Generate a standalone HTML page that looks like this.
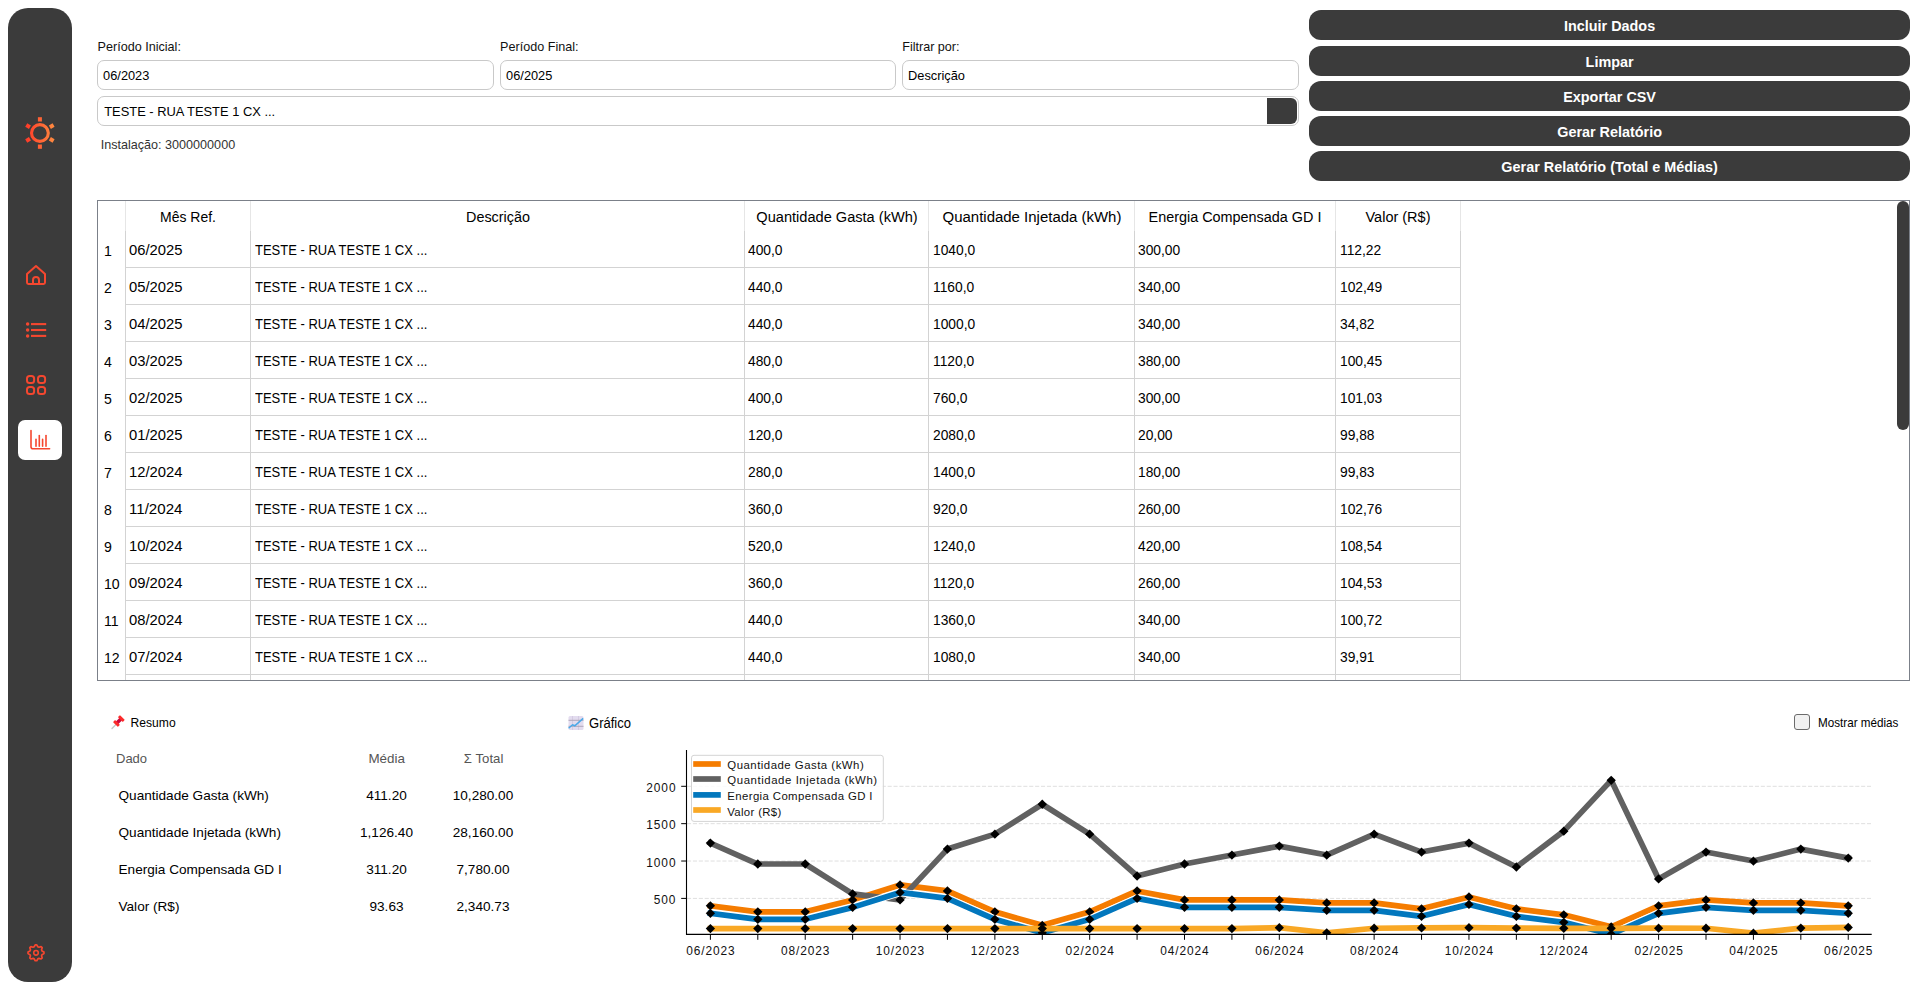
<!DOCTYPE html>
<html><head><meta charset="utf-8"><title>Relatório</title>
<style>
html,body{margin:0;padding:0;}
body{width:1915px;height:982px;position:relative;overflow:hidden;background:#fff;font-family:"Liberation Sans", sans-serif;}
.t{position:absolute;white-space:nowrap;}
.box{position:absolute;box-sizing:border-box;border:1px solid #c9c9c9;border-radius:7px;background:#fff;}
</style></head><body>
<div style="position:absolute;left:8px;top:8px;width:64px;height:974px;background:#3b3b3b;border-radius:20px;"></div>
<div style="position:absolute;left:18px;top:420px;width:44px;height:40px;background:#fff;border-radius:7px;"></div>
<svg style="position:absolute;left:0;top:0" width="80" height="982" viewBox="0 0 80 982"><defs><linearGradient id="sg" gradientUnits="userSpaceOnUse" x1="26" y1="0" x2="54" y2="0"><stop offset="0" stop-color="#ff3a28"/><stop offset="1" stop-color="#ff8a40"/></linearGradient></defs><g stroke="url(#sg)" fill="none"><circle cx="39.9" cy="133" r="8.4" stroke-width="3.1" stroke="url(#sg)"/><line x1="39.90" y1="121.50" x2="39.90" y2="117.20" stroke-width="4"/><line x1="49.86" y1="127.25" x2="53.58" y2="125.10" stroke-width="4"/><line x1="49.86" y1="138.75" x2="53.58" y2="140.90" stroke-width="4"/><line x1="39.90" y1="144.50" x2="39.90" y2="148.80" stroke-width="4"/><line x1="29.94" y1="138.75" x2="26.22" y2="140.90" stroke-width="4"/><line x1="29.94" y1="127.25" x2="26.22" y2="125.10" stroke-width="4"/></g><g fill="none" stroke="#f5472f" stroke-width="2" stroke-linejoin="round" stroke-linecap="round"><path d="M27 282.6 V274 L36 266 L45 274 V282.6 Q45 284 43.6 284 H28.4 Q27 284 27 282.6 Z"/><path d="M33 284 V280 A3 3 0 0 1 39 280 V284"/></g><g fill="#f5472f"><circle cx="27.6" cy="324.1" r="1.75"/><circle cx="27.6" cy="330" r="1.75"/><circle cx="27.6" cy="335.9" r="1.75"/></g><g stroke="#f5472f" stroke-width="2.1"><line x1="31" y1="324.1" x2="46.2" y2="324.1"/><line x1="31" y1="330" x2="46.2" y2="330"/><line x1="31" y1="335.9" x2="46.2" y2="335.9"/></g><g fill="none" stroke="#f5472f" stroke-width="2"><rect x="27" y="376" width="7.1" height="7.1" rx="2.6"/><rect x="27" y="387" width="7.1" height="7.1" rx="2.6"/><rect x="38" y="376" width="7.1" height="7.1" rx="2.6"/><rect x="38" y="387" width="7.1" height="7.1" rx="2.6"/></g><g fill="none" stroke="#f5472f" stroke-width="1.6" stroke-linecap="round"><path d="M31 430.5 V446.8 Q31 448.8 33 448.8 H49.6"/><line x1="36.0" y1="439.4" x2="36.0" y2="446.2"/><line x1="39.3" y1="435.5" x2="39.3" y2="446.2"/><line x1="42.6" y1="439.4" x2="42.6" y2="446.2"/><line x1="46.0" y1="435.5" x2="46.0" y2="446.2"/></g><path d="M35.22 944.84 L36.78 944.84 L37.83 946.77 L38.97 947.24 L41.08 946.62 L42.18 947.72 L41.56 949.83 L42.03 950.97 L43.96 952.02 L43.96 953.58 L42.03 954.63 L41.56 955.77 L42.18 957.88 L41.08 958.98 L38.97 958.36 L37.83 958.83 L36.78 960.76 L35.22 960.76 L34.17 958.83 L33.03 958.36 L30.92 958.98 L29.82 957.88 L30.44 955.77 L29.97 954.63 L28.04 953.58 L28.04 952.02 L29.97 950.97 L30.44 949.83 L29.82 947.72 L30.92 946.62 L33.03 947.24 L34.17 946.77 Z" fill="none" stroke="#f5472f" stroke-width="1.7" stroke-linejoin="round"/><circle cx="36.0" cy="952.8" r="2.3" fill="none" stroke="#f5472f" stroke-width="1.6"/></svg>
<div class="t" style="left:97.60px;top:41.33px;font-size:12.6px;line-height:12.6px;color:#111;font-weight:400;">Período Inicial:</div>
<div class="t" style="left:500.10px;top:41.33px;font-size:12.6px;line-height:12.6px;color:#111;font-weight:400;">Período Final:</div>
<div class="t" style="left:902.20px;top:41.33px;font-size:12.6px;line-height:12.6px;color:#111;font-weight:400;">Filtrar por:</div>
<div class="box" style="left:97px;top:60px;width:397px;height:30px;"></div>
<div class="t" style="left:103.10px;top:70.16px;font-size:12.8px;line-height:12.8px;color:#000;font-weight:400;">06/2023</div>
<div class="box" style="left:500px;top:60px;width:396px;height:30px;"></div>
<div class="t" style="left:506.10px;top:70.16px;font-size:12.8px;line-height:12.8px;color:#000;font-weight:400;">06/2025</div>
<div class="box" style="left:902px;top:60px;width:397px;height:30px;"></div>
<div class="t" style="left:908.10px;top:70.16px;font-size:12.8px;line-height:12.8px;color:#000;font-weight:400;">Descrição</div>
<div class="box" style="left:97px;top:96px;width:1202px;height:30px;"></div>
<div style="position:absolute;left:1267px;top:98px;width:30px;height:26px;background:#3b3b3b;border-radius:0 6px 6px 0;"></div>
<div class="t" style="left:104.20px;top:106.08px;font-size:12.9px;line-height:12.9px;color:#000;font-weight:400;">TESTE - RUA TESTE 1 CX ...</div>
<div class="t" style="left:100.70px;top:139.33px;font-size:12.6px;line-height:12.6px;color:#333;font-weight:400;">Instalação: 3000000000</div>
<div style="position:absolute;left:1309px;top:10px;width:601px;height:30px;background:#3b3b3b;border-radius:12px;"></div>
<div class="t" style="left:1309.60px;width:600px;text-align:center;top:18.81px;font-size:14.4px;line-height:14.4px;color:#fff;font-weight:700;">Incluir Dados</div>
<div style="position:absolute;left:1309px;top:46px;width:601px;height:30px;background:#3b3b3b;border-radius:12px;"></div>
<div class="t" style="left:1309.60px;width:600px;text-align:center;top:54.81px;font-size:14.4px;line-height:14.4px;color:#fff;font-weight:700;">Limpar</div>
<div style="position:absolute;left:1309px;top:81px;width:601px;height:30px;background:#3b3b3b;border-radius:12px;"></div>
<div class="t" style="left:1309.60px;width:600px;text-align:center;top:89.81px;font-size:14.4px;line-height:14.4px;color:#fff;font-weight:700;">Exportar CSV</div>
<div style="position:absolute;left:1309px;top:116px;width:601px;height:30px;background:#3b3b3b;border-radius:12px;"></div>
<div class="t" style="left:1309.60px;width:600px;text-align:center;top:124.81px;font-size:14.4px;line-height:14.4px;color:#fff;font-weight:700;">Gerar Relatório</div>
<div style="position:absolute;left:1309px;top:151px;width:601px;height:30px;background:#3b3b3b;border-radius:12px;"></div>
<div class="t" style="left:1309.60px;width:600px;text-align:center;top:159.81px;font-size:14.4px;line-height:14.4px;color:#fff;font-weight:700;">Gerar Relatório (Total e Médias)</div>
<div style="position:absolute;left:97px;top:200px;width:1811px;height:479px;border:1px solid #7b8089;background:#fff;"></div>
<div style="position:absolute;left:125px;top:201px;width:1px;height:30px;background:#e6e6e6;"></div>
<div style="position:absolute;left:125px;top:231px;width:1px;height:449px;background:#d3d3d3;"></div>
<div style="position:absolute;left:250px;top:201px;width:1px;height:30px;background:#e6e6e6;"></div>
<div style="position:absolute;left:250px;top:231px;width:1px;height:449px;background:#d3d3d3;"></div>
<div style="position:absolute;left:744px;top:201px;width:1px;height:30px;background:#e6e6e6;"></div>
<div style="position:absolute;left:744px;top:231px;width:1px;height:449px;background:#d3d3d3;"></div>
<div style="position:absolute;left:928px;top:201px;width:1px;height:30px;background:#e6e6e6;"></div>
<div style="position:absolute;left:928px;top:231px;width:1px;height:449px;background:#d3d3d3;"></div>
<div style="position:absolute;left:1134px;top:201px;width:1px;height:30px;background:#e6e6e6;"></div>
<div style="position:absolute;left:1134px;top:231px;width:1px;height:449px;background:#d3d3d3;"></div>
<div style="position:absolute;left:1335px;top:201px;width:1px;height:30px;background:#e6e6e6;"></div>
<div style="position:absolute;left:1335px;top:231px;width:1px;height:449px;background:#d3d3d3;"></div>
<div style="position:absolute;left:1460px;top:201px;width:1px;height:30px;background:#e6e6e6;"></div>
<div style="position:absolute;left:1460px;top:231px;width:1px;height:449px;background:#d3d3d3;"></div>
<div style="position:absolute;left:125px;top:267px;width:1336px;height:1px;background:#d3d3d3;"></div>
<div style="position:absolute;left:125px;top:304px;width:1336px;height:1px;background:#d3d3d3;"></div>
<div style="position:absolute;left:125px;top:341px;width:1336px;height:1px;background:#d3d3d3;"></div>
<div style="position:absolute;left:125px;top:378px;width:1336px;height:1px;background:#d3d3d3;"></div>
<div style="position:absolute;left:125px;top:415px;width:1336px;height:1px;background:#d3d3d3;"></div>
<div style="position:absolute;left:125px;top:452px;width:1336px;height:1px;background:#d3d3d3;"></div>
<div style="position:absolute;left:125px;top:489px;width:1336px;height:1px;background:#d3d3d3;"></div>
<div style="position:absolute;left:125px;top:526px;width:1336px;height:1px;background:#d3d3d3;"></div>
<div style="position:absolute;left:125px;top:563px;width:1336px;height:1px;background:#d3d3d3;"></div>
<div style="position:absolute;left:125px;top:600px;width:1336px;height:1px;background:#d3d3d3;"></div>
<div style="position:absolute;left:125px;top:637px;width:1336px;height:1px;background:#d3d3d3;"></div>
<div style="position:absolute;left:125px;top:674px;width:1336px;height:1px;background:#d3d3d3;"></div>
<div class="t" style="left:-112.00px;width:600px;text-align:center;top:209.13px;font-size:15.2px;line-height:15.2px;color:#000;font-weight:400;transform:scaleX(0.9208);transform-origin:50% 0;">Mês Ref.</div>
<div class="t" style="left:197.50px;width:600px;text-align:center;top:209.13px;font-size:15.2px;line-height:15.2px;color:#000;font-weight:400;transform:scaleX(0.9471);transform-origin:50% 0;">Descrição</div>
<div class="t" style="left:536.50px;width:600px;text-align:center;top:209.13px;font-size:15.2px;line-height:15.2px;color:#000;font-weight:400;transform:scaleX(0.9606);transform-origin:50% 0;">Quantidade Gasta (kWh)</div>
<div class="t" style="left:731.50px;width:600px;text-align:center;top:209.13px;font-size:15.2px;line-height:15.2px;color:#000;font-weight:400;transform:scaleX(0.9853);transform-origin:50% 0;">Quantidade Injetada (kWh)</div>
<div class="t" style="left:935.00px;width:600px;text-align:center;top:209.13px;font-size:15.2px;line-height:15.2px;color:#000;font-weight:400;transform:scaleX(0.9479);transform-origin:50% 0;">Energia Compensada GD I</div>
<div class="t" style="left:1098.00px;width:600px;text-align:center;top:209.13px;font-size:15.2px;line-height:15.2px;color:#000;font-weight:400;transform:scaleX(0.9540);transform-origin:50% 0;">Valor (R$)</div>
<div class="t" style="left:103.60px;top:243.13px;font-size:15.2px;line-height:15.2px;color:#000;font-weight:400;transform:scaleX(0.9300);transform-origin:0 0;">1</div>
<div class="t" style="left:129.30px;top:242.13px;font-size:15.2px;line-height:15.2px;color:#000;font-weight:400;transform:scaleX(0.9737);transform-origin:0 0;">06/2025</div>
<div class="t" style="left:255.10px;top:242.13px;font-size:15.2px;line-height:15.2px;color:#000;font-weight:400;transform:scaleX(0.8557);transform-origin:0 0;">TESTE - RUA TESTE 1 CX ...</div>
<div class="t" style="left:748.40px;top:242.13px;font-size:15.2px;line-height:15.2px;color:#000;font-weight:400;transform:scaleX(0.9082);transform-origin:0 0;">400,0</div>
<div class="t" style="left:933.00px;top:242.13px;font-size:15.2px;line-height:15.2px;color:#000;font-weight:400;transform:scaleX(0.9082);transform-origin:0 0;">1040,0</div>
<div class="t" style="left:1138.20px;top:242.13px;font-size:15.2px;line-height:15.2px;color:#000;font-weight:400;transform:scaleX(0.9082);transform-origin:0 0;">300,00</div>
<div class="t" style="left:1339.90px;top:242.13px;font-size:15.2px;line-height:15.2px;color:#000;font-weight:400;transform:scaleX(0.9082);transform-origin:0 0;">112,22</div>
<div class="t" style="left:103.60px;top:280.13px;font-size:15.2px;line-height:15.2px;color:#000;font-weight:400;transform:scaleX(0.9300);transform-origin:0 0;">2</div>
<div class="t" style="left:129.30px;top:279.13px;font-size:15.2px;line-height:15.2px;color:#000;font-weight:400;transform:scaleX(0.9737);transform-origin:0 0;">05/2025</div>
<div class="t" style="left:255.10px;top:279.13px;font-size:15.2px;line-height:15.2px;color:#000;font-weight:400;transform:scaleX(0.8557);transform-origin:0 0;">TESTE - RUA TESTE 1 CX ...</div>
<div class="t" style="left:748.40px;top:279.13px;font-size:15.2px;line-height:15.2px;color:#000;font-weight:400;transform:scaleX(0.9082);transform-origin:0 0;">440,0</div>
<div class="t" style="left:933.00px;top:279.13px;font-size:15.2px;line-height:15.2px;color:#000;font-weight:400;transform:scaleX(0.9082);transform-origin:0 0;">1160,0</div>
<div class="t" style="left:1138.20px;top:279.13px;font-size:15.2px;line-height:15.2px;color:#000;font-weight:400;transform:scaleX(0.9082);transform-origin:0 0;">340,00</div>
<div class="t" style="left:1339.90px;top:279.13px;font-size:15.2px;line-height:15.2px;color:#000;font-weight:400;transform:scaleX(0.9082);transform-origin:0 0;">102,49</div>
<div class="t" style="left:103.60px;top:317.13px;font-size:15.2px;line-height:15.2px;color:#000;font-weight:400;transform:scaleX(0.9300);transform-origin:0 0;">3</div>
<div class="t" style="left:129.30px;top:316.13px;font-size:15.2px;line-height:15.2px;color:#000;font-weight:400;transform:scaleX(0.9737);transform-origin:0 0;">04/2025</div>
<div class="t" style="left:255.10px;top:316.13px;font-size:15.2px;line-height:15.2px;color:#000;font-weight:400;transform:scaleX(0.8557);transform-origin:0 0;">TESTE - RUA TESTE 1 CX ...</div>
<div class="t" style="left:748.40px;top:316.13px;font-size:15.2px;line-height:15.2px;color:#000;font-weight:400;transform:scaleX(0.9082);transform-origin:0 0;">440,0</div>
<div class="t" style="left:933.00px;top:316.13px;font-size:15.2px;line-height:15.2px;color:#000;font-weight:400;transform:scaleX(0.9082);transform-origin:0 0;">1000,0</div>
<div class="t" style="left:1138.20px;top:316.13px;font-size:15.2px;line-height:15.2px;color:#000;font-weight:400;transform:scaleX(0.9082);transform-origin:0 0;">340,00</div>
<div class="t" style="left:1339.90px;top:316.13px;font-size:15.2px;line-height:15.2px;color:#000;font-weight:400;transform:scaleX(0.9082);transform-origin:0 0;">34,82</div>
<div class="t" style="left:103.60px;top:354.13px;font-size:15.2px;line-height:15.2px;color:#000;font-weight:400;transform:scaleX(0.9300);transform-origin:0 0;">4</div>
<div class="t" style="left:129.30px;top:353.13px;font-size:15.2px;line-height:15.2px;color:#000;font-weight:400;transform:scaleX(0.9737);transform-origin:0 0;">03/2025</div>
<div class="t" style="left:255.10px;top:353.13px;font-size:15.2px;line-height:15.2px;color:#000;font-weight:400;transform:scaleX(0.8557);transform-origin:0 0;">TESTE - RUA TESTE 1 CX ...</div>
<div class="t" style="left:748.40px;top:353.13px;font-size:15.2px;line-height:15.2px;color:#000;font-weight:400;transform:scaleX(0.9082);transform-origin:0 0;">480,0</div>
<div class="t" style="left:933.00px;top:353.13px;font-size:15.2px;line-height:15.2px;color:#000;font-weight:400;transform:scaleX(0.9082);transform-origin:0 0;">1120,0</div>
<div class="t" style="left:1138.20px;top:353.13px;font-size:15.2px;line-height:15.2px;color:#000;font-weight:400;transform:scaleX(0.9082);transform-origin:0 0;">380,00</div>
<div class="t" style="left:1339.90px;top:353.13px;font-size:15.2px;line-height:15.2px;color:#000;font-weight:400;transform:scaleX(0.9082);transform-origin:0 0;">100,45</div>
<div class="t" style="left:103.60px;top:391.13px;font-size:15.2px;line-height:15.2px;color:#000;font-weight:400;transform:scaleX(0.9300);transform-origin:0 0;">5</div>
<div class="t" style="left:129.30px;top:390.13px;font-size:15.2px;line-height:15.2px;color:#000;font-weight:400;transform:scaleX(0.9737);transform-origin:0 0;">02/2025</div>
<div class="t" style="left:255.10px;top:390.13px;font-size:15.2px;line-height:15.2px;color:#000;font-weight:400;transform:scaleX(0.8557);transform-origin:0 0;">TESTE - RUA TESTE 1 CX ...</div>
<div class="t" style="left:748.40px;top:390.13px;font-size:15.2px;line-height:15.2px;color:#000;font-weight:400;transform:scaleX(0.9082);transform-origin:0 0;">400,0</div>
<div class="t" style="left:933.00px;top:390.13px;font-size:15.2px;line-height:15.2px;color:#000;font-weight:400;transform:scaleX(0.9082);transform-origin:0 0;">760,0</div>
<div class="t" style="left:1138.20px;top:390.13px;font-size:15.2px;line-height:15.2px;color:#000;font-weight:400;transform:scaleX(0.9082);transform-origin:0 0;">300,00</div>
<div class="t" style="left:1339.90px;top:390.13px;font-size:15.2px;line-height:15.2px;color:#000;font-weight:400;transform:scaleX(0.9082);transform-origin:0 0;">101,03</div>
<div class="t" style="left:103.60px;top:428.13px;font-size:15.2px;line-height:15.2px;color:#000;font-weight:400;transform:scaleX(0.9300);transform-origin:0 0;">6</div>
<div class="t" style="left:129.30px;top:427.13px;font-size:15.2px;line-height:15.2px;color:#000;font-weight:400;transform:scaleX(0.9737);transform-origin:0 0;">01/2025</div>
<div class="t" style="left:255.10px;top:427.13px;font-size:15.2px;line-height:15.2px;color:#000;font-weight:400;transform:scaleX(0.8557);transform-origin:0 0;">TESTE - RUA TESTE 1 CX ...</div>
<div class="t" style="left:748.40px;top:427.13px;font-size:15.2px;line-height:15.2px;color:#000;font-weight:400;transform:scaleX(0.9082);transform-origin:0 0;">120,0</div>
<div class="t" style="left:933.00px;top:427.13px;font-size:15.2px;line-height:15.2px;color:#000;font-weight:400;transform:scaleX(0.9082);transform-origin:0 0;">2080,0</div>
<div class="t" style="left:1138.20px;top:427.13px;font-size:15.2px;line-height:15.2px;color:#000;font-weight:400;transform:scaleX(0.9082);transform-origin:0 0;">20,00</div>
<div class="t" style="left:1339.90px;top:427.13px;font-size:15.2px;line-height:15.2px;color:#000;font-weight:400;transform:scaleX(0.9082);transform-origin:0 0;">99,88</div>
<div class="t" style="left:103.60px;top:465.13px;font-size:15.2px;line-height:15.2px;color:#000;font-weight:400;transform:scaleX(0.9300);transform-origin:0 0;">7</div>
<div class="t" style="left:129.30px;top:464.13px;font-size:15.2px;line-height:15.2px;color:#000;font-weight:400;transform:scaleX(0.9737);transform-origin:0 0;">12/2024</div>
<div class="t" style="left:255.10px;top:464.13px;font-size:15.2px;line-height:15.2px;color:#000;font-weight:400;transform:scaleX(0.8557);transform-origin:0 0;">TESTE - RUA TESTE 1 CX ...</div>
<div class="t" style="left:748.40px;top:464.13px;font-size:15.2px;line-height:15.2px;color:#000;font-weight:400;transform:scaleX(0.9082);transform-origin:0 0;">280,0</div>
<div class="t" style="left:933.00px;top:464.13px;font-size:15.2px;line-height:15.2px;color:#000;font-weight:400;transform:scaleX(0.9082);transform-origin:0 0;">1400,0</div>
<div class="t" style="left:1138.20px;top:464.13px;font-size:15.2px;line-height:15.2px;color:#000;font-weight:400;transform:scaleX(0.9082);transform-origin:0 0;">180,00</div>
<div class="t" style="left:1339.90px;top:464.13px;font-size:15.2px;line-height:15.2px;color:#000;font-weight:400;transform:scaleX(0.9082);transform-origin:0 0;">99,83</div>
<div class="t" style="left:103.60px;top:502.13px;font-size:15.2px;line-height:15.2px;color:#000;font-weight:400;transform:scaleX(0.9300);transform-origin:0 0;">8</div>
<div class="t" style="left:129.30px;top:501.13px;font-size:15.2px;line-height:15.2px;color:#000;font-weight:400;transform:scaleX(0.9941);transform-origin:0 0;">11/2024</div>
<div class="t" style="left:255.10px;top:501.13px;font-size:15.2px;line-height:15.2px;color:#000;font-weight:400;transform:scaleX(0.8557);transform-origin:0 0;">TESTE - RUA TESTE 1 CX ...</div>
<div class="t" style="left:748.40px;top:501.13px;font-size:15.2px;line-height:15.2px;color:#000;font-weight:400;transform:scaleX(0.9082);transform-origin:0 0;">360,0</div>
<div class="t" style="left:933.00px;top:501.13px;font-size:15.2px;line-height:15.2px;color:#000;font-weight:400;transform:scaleX(0.9082);transform-origin:0 0;">920,0</div>
<div class="t" style="left:1138.20px;top:501.13px;font-size:15.2px;line-height:15.2px;color:#000;font-weight:400;transform:scaleX(0.9082);transform-origin:0 0;">260,00</div>
<div class="t" style="left:1339.90px;top:501.13px;font-size:15.2px;line-height:15.2px;color:#000;font-weight:400;transform:scaleX(0.9082);transform-origin:0 0;">102,76</div>
<div class="t" style="left:103.60px;top:539.13px;font-size:15.2px;line-height:15.2px;color:#000;font-weight:400;transform:scaleX(0.9300);transform-origin:0 0;">9</div>
<div class="t" style="left:129.30px;top:538.13px;font-size:15.2px;line-height:15.2px;color:#000;font-weight:400;transform:scaleX(0.9737);transform-origin:0 0;">10/2024</div>
<div class="t" style="left:255.10px;top:538.13px;font-size:15.2px;line-height:15.2px;color:#000;font-weight:400;transform:scaleX(0.8557);transform-origin:0 0;">TESTE - RUA TESTE 1 CX ...</div>
<div class="t" style="left:748.40px;top:538.13px;font-size:15.2px;line-height:15.2px;color:#000;font-weight:400;transform:scaleX(0.9082);transform-origin:0 0;">520,0</div>
<div class="t" style="left:933.00px;top:538.13px;font-size:15.2px;line-height:15.2px;color:#000;font-weight:400;transform:scaleX(0.9082);transform-origin:0 0;">1240,0</div>
<div class="t" style="left:1138.20px;top:538.13px;font-size:15.2px;line-height:15.2px;color:#000;font-weight:400;transform:scaleX(0.9082);transform-origin:0 0;">420,00</div>
<div class="t" style="left:1339.90px;top:538.13px;font-size:15.2px;line-height:15.2px;color:#000;font-weight:400;transform:scaleX(0.9082);transform-origin:0 0;">108,54</div>
<div class="t" style="left:103.60px;top:576.13px;font-size:15.2px;line-height:15.2px;color:#000;font-weight:400;transform:scaleX(0.9300);transform-origin:0 0;">10</div>
<div class="t" style="left:129.30px;top:575.13px;font-size:15.2px;line-height:15.2px;color:#000;font-weight:400;transform:scaleX(0.9737);transform-origin:0 0;">09/2024</div>
<div class="t" style="left:255.10px;top:575.13px;font-size:15.2px;line-height:15.2px;color:#000;font-weight:400;transform:scaleX(0.8557);transform-origin:0 0;">TESTE - RUA TESTE 1 CX ...</div>
<div class="t" style="left:748.40px;top:575.13px;font-size:15.2px;line-height:15.2px;color:#000;font-weight:400;transform:scaleX(0.9082);transform-origin:0 0;">360,0</div>
<div class="t" style="left:933.00px;top:575.13px;font-size:15.2px;line-height:15.2px;color:#000;font-weight:400;transform:scaleX(0.9082);transform-origin:0 0;">1120,0</div>
<div class="t" style="left:1138.20px;top:575.13px;font-size:15.2px;line-height:15.2px;color:#000;font-weight:400;transform:scaleX(0.9082);transform-origin:0 0;">260,00</div>
<div class="t" style="left:1339.90px;top:575.13px;font-size:15.2px;line-height:15.2px;color:#000;font-weight:400;transform:scaleX(0.9082);transform-origin:0 0;">104,53</div>
<div class="t" style="left:103.60px;top:613.13px;font-size:15.2px;line-height:15.2px;color:#000;font-weight:400;transform:scaleX(0.9300);transform-origin:0 0;">11</div>
<div class="t" style="left:129.30px;top:612.13px;font-size:15.2px;line-height:15.2px;color:#000;font-weight:400;transform:scaleX(0.9737);transform-origin:0 0;">08/2024</div>
<div class="t" style="left:255.10px;top:612.13px;font-size:15.2px;line-height:15.2px;color:#000;font-weight:400;transform:scaleX(0.8557);transform-origin:0 0;">TESTE - RUA TESTE 1 CX ...</div>
<div class="t" style="left:748.40px;top:612.13px;font-size:15.2px;line-height:15.2px;color:#000;font-weight:400;transform:scaleX(0.9082);transform-origin:0 0;">440,0</div>
<div class="t" style="left:933.00px;top:612.13px;font-size:15.2px;line-height:15.2px;color:#000;font-weight:400;transform:scaleX(0.9082);transform-origin:0 0;">1360,0</div>
<div class="t" style="left:1138.20px;top:612.13px;font-size:15.2px;line-height:15.2px;color:#000;font-weight:400;transform:scaleX(0.9082);transform-origin:0 0;">340,00</div>
<div class="t" style="left:1339.90px;top:612.13px;font-size:15.2px;line-height:15.2px;color:#000;font-weight:400;transform:scaleX(0.9082);transform-origin:0 0;">100,72</div>
<div class="t" style="left:103.60px;top:650.13px;font-size:15.2px;line-height:15.2px;color:#000;font-weight:400;transform:scaleX(0.9300);transform-origin:0 0;">12</div>
<div class="t" style="left:129.30px;top:649.13px;font-size:15.2px;line-height:15.2px;color:#000;font-weight:400;transform:scaleX(0.9737);transform-origin:0 0;">07/2024</div>
<div class="t" style="left:255.10px;top:649.13px;font-size:15.2px;line-height:15.2px;color:#000;font-weight:400;transform:scaleX(0.8557);transform-origin:0 0;">TESTE - RUA TESTE 1 CX ...</div>
<div class="t" style="left:748.40px;top:649.13px;font-size:15.2px;line-height:15.2px;color:#000;font-weight:400;transform:scaleX(0.9082);transform-origin:0 0;">440,0</div>
<div class="t" style="left:933.00px;top:649.13px;font-size:15.2px;line-height:15.2px;color:#000;font-weight:400;transform:scaleX(0.9082);transform-origin:0 0;">1080,0</div>
<div class="t" style="left:1138.20px;top:649.13px;font-size:15.2px;line-height:15.2px;color:#000;font-weight:400;transform:scaleX(0.9082);transform-origin:0 0;">340,00</div>
<div class="t" style="left:1339.90px;top:649.13px;font-size:15.2px;line-height:15.2px;color:#000;font-weight:400;transform:scaleX(0.9082);transform-origin:0 0;">39,91</div>
<div style="position:absolute;left:1897px;top:201px;width:12px;height:229px;background:#3b3b3b;border-radius:6px;"></div>
<svg style="position:absolute;left:108px;top:712px" width="20" height="20" viewBox="0 0 20 20"><line x1="4.0" y1="16.4" x2="8.2" y2="12.2" stroke="#c4c8c8" stroke-width="1.4" stroke-linecap="round"/><g transform="rotate(45 10.9 9.0)"><rect x="9.1" y="5.8" width="3.6" height="6.4" fill="#c8083f"/><rect x="7.5" y="4.1" width="6.8" height="2.9" rx="0.5" fill="#fb2b2b"/><rect x="7.5" y="11.0" width="6.8" height="2.9" rx="0.5" fill="#fb2b2b"/></g></svg>
<div class="t" style="left:130.60px;top:716.76px;font-size:12.1px;line-height:12.1px;color:#000;font-weight:400;">Resumo</div>
<div class="t" style="left:116.00px;top:752.00px;font-size:13.0px;line-height:13.0px;color:#555;font-weight:400;">Dado</div>
<div class="t" style="left:86.70px;width:600px;text-align:center;top:751.66px;font-size:13.4px;line-height:13.4px;color:#555;font-weight:400;">Média</div>
<div class="t" style="left:183.50px;width:600px;text-align:center;top:751.83px;font-size:13.2px;line-height:13.2px;color:#555;font-weight:400;">Σ Total</div>
<div class="t" style="left:118.50px;top:789.49px;font-size:13.6px;line-height:13.6px;color:#000;font-weight:400;">Quantidade Gasta (kWh)</div>
<div class="t" style="left:86.50px;width:600px;text-align:center;top:789.49px;font-size:13.6px;line-height:13.6px;color:#000;font-weight:400;">411.20</div>
<div class="t" style="left:183.00px;width:600px;text-align:center;top:789.49px;font-size:13.6px;line-height:13.6px;color:#000;font-weight:400;">10,280.00</div>
<div class="t" style="left:118.50px;top:826.49px;font-size:13.6px;line-height:13.6px;color:#000;font-weight:400;">Quantidade Injetada (kWh)</div>
<div class="t" style="left:86.50px;width:600px;text-align:center;top:826.49px;font-size:13.6px;line-height:13.6px;color:#000;font-weight:400;">1,126.40</div>
<div class="t" style="left:183.00px;width:600px;text-align:center;top:826.49px;font-size:13.6px;line-height:13.6px;color:#000;font-weight:400;">28,160.00</div>
<div class="t" style="left:118.50px;top:863.49px;font-size:13.6px;line-height:13.6px;color:#000;font-weight:400;">Energia Compensada GD I</div>
<div class="t" style="left:86.50px;width:600px;text-align:center;top:863.49px;font-size:13.6px;line-height:13.6px;color:#000;font-weight:400;">311.20</div>
<div class="t" style="left:183.00px;width:600px;text-align:center;top:863.49px;font-size:13.6px;line-height:13.6px;color:#000;font-weight:400;">7,780.00</div>
<div class="t" style="left:118.50px;top:900.49px;font-size:13.6px;line-height:13.6px;color:#000;font-weight:400;">Valor (R$)</div>
<div class="t" style="left:86.50px;width:600px;text-align:center;top:900.49px;font-size:13.6px;line-height:13.6px;color:#000;font-weight:400;">93.63</div>
<div class="t" style="left:183.00px;width:600px;text-align:center;top:900.49px;font-size:13.6px;line-height:13.6px;color:#000;font-weight:400;">2,340.73</div>
<svg style="position:absolute;left:568px;top:716px" width="16" height="14" viewBox="0 0 16 14"><rect x="0.5" y="0" width="15" height="14" rx="1.5" fill="#e3dcef"/><g stroke="#d2c8de" stroke-width="0.8"><line x1="4.5" y1="0" x2="4.5" y2="14"/><line x1="10.5" y1="0" x2="10.5" y2="14"/></g><g stroke="#aaa2b4" stroke-width="0.9"><line x1="0.5" y1="4.3" x2="15.5" y2="4.3"/><line x1="0.5" y1="10.3" x2="15.5" y2="10.3"/></g><polyline points="0.6,12.2 4.5,8.8 6.8,9.8 15.2,2.4" fill="none" stroke="#4aa8e8" stroke-width="1.5"/></svg>
<div class="t" style="left:589.10px;top:716.15px;font-size:14.0px;line-height:14.0px;color:#000;font-weight:400;transform:scaleX(0.9308);transform-origin:0 0;">Gráfico</div>
<div style="position:absolute;left:1794px;top:714px;width:14px;height:14px;border:1px solid #6b6b6b;border-radius:3px;background:#f1f1f1;"></div>
<div class="t" style="left:1817.60px;top:716.50px;font-size:12.4px;line-height:12.4px;color:#000;font-weight:400;transform:scaleX(0.9409);transform-origin:0 0;">Mostrar médias</div>
<svg style="position:absolute;left:0;top:0" width="1915" height="982" viewBox="0 0 1915 982"><defs><clipPath id="pc"><rect x="687" y="740" width="1200" height="194.4"/></clipPath></defs><line x1="687" y1="786.30" x2="1871" y2="786.30" stroke="#dfdfdf" stroke-width="1" stroke-dasharray="4.1 1.8"/><line x1="681.2" y1="786.30" x2="686.5" y2="786.30" stroke="#000" stroke-width="1"/><line x1="687" y1="823.67" x2="1871" y2="823.67" stroke="#dfdfdf" stroke-width="1" stroke-dasharray="4.1 1.8"/><line x1="681.2" y1="823.67" x2="686.5" y2="823.67" stroke="#000" stroke-width="1"/><line x1="687" y1="861.03" x2="1871" y2="861.03" stroke="#dfdfdf" stroke-width="1" stroke-dasharray="4.1 1.8"/><line x1="681.2" y1="861.03" x2="686.5" y2="861.03" stroke="#000" stroke-width="1"/><line x1="687" y1="898.40" x2="1871" y2="898.40" stroke="#dfdfdf" stroke-width="1" stroke-dasharray="4.1 1.8"/><line x1="681.2" y1="898.40" x2="686.5" y2="898.40" stroke="#000" stroke-width="1"/><line x1="710.40" y1="934.4" x2="710.40" y2="939.8" stroke="#000" stroke-width="1"/><line x1="757.81" y1="934.4" x2="757.81" y2="939.8" stroke="#000" stroke-width="1"/><line x1="805.22" y1="934.4" x2="805.22" y2="939.8" stroke="#000" stroke-width="1"/><line x1="852.63" y1="934.4" x2="852.63" y2="939.8" stroke="#000" stroke-width="1"/><line x1="900.04" y1="934.4" x2="900.04" y2="939.8" stroke="#000" stroke-width="1"/><line x1="947.45" y1="934.4" x2="947.45" y2="939.8" stroke="#000" stroke-width="1"/><line x1="994.86" y1="934.4" x2="994.86" y2="939.8" stroke="#000" stroke-width="1"/><line x1="1042.27" y1="934.4" x2="1042.27" y2="939.8" stroke="#000" stroke-width="1"/><line x1="1089.68" y1="934.4" x2="1089.68" y2="939.8" stroke="#000" stroke-width="1"/><line x1="1137.09" y1="934.4" x2="1137.09" y2="939.8" stroke="#000" stroke-width="1"/><line x1="1184.50" y1="934.4" x2="1184.50" y2="939.8" stroke="#000" stroke-width="1"/><line x1="1231.91" y1="934.4" x2="1231.91" y2="939.8" stroke="#000" stroke-width="1"/><line x1="1279.32" y1="934.4" x2="1279.32" y2="939.8" stroke="#000" stroke-width="1"/><line x1="1326.73" y1="934.4" x2="1326.73" y2="939.8" stroke="#000" stroke-width="1"/><line x1="1374.14" y1="934.4" x2="1374.14" y2="939.8" stroke="#000" stroke-width="1"/><line x1="1421.55" y1="934.4" x2="1421.55" y2="939.8" stroke="#000" stroke-width="1"/><line x1="1468.96" y1="934.4" x2="1468.96" y2="939.8" stroke="#000" stroke-width="1"/><line x1="1516.37" y1="934.4" x2="1516.37" y2="939.8" stroke="#000" stroke-width="1"/><line x1="1563.78" y1="934.4" x2="1563.78" y2="939.8" stroke="#000" stroke-width="1"/><line x1="1611.19" y1="934.4" x2="1611.19" y2="939.8" stroke="#000" stroke-width="1"/><line x1="1658.60" y1="934.4" x2="1658.60" y2="939.8" stroke="#000" stroke-width="1"/><line x1="1706.01" y1="934.4" x2="1706.01" y2="939.8" stroke="#000" stroke-width="1"/><line x1="1753.42" y1="934.4" x2="1753.42" y2="939.8" stroke="#000" stroke-width="1"/><line x1="1800.83" y1="934.4" x2="1800.83" y2="939.8" stroke="#000" stroke-width="1"/><line x1="1848.24" y1="934.4" x2="1848.24" y2="939.8" stroke="#000" stroke-width="1"/><g clip-path="url(#pc)"><polyline points="710.40,905.87 757.81,911.85 805.22,911.85 852.63,899.89 900.04,884.95 947.45,890.93 994.86,911.85 1042.27,925.30 1089.68,911.85 1137.09,890.93 1184.50,899.89 1231.91,899.89 1279.32,899.89 1326.73,902.88 1374.14,902.88 1421.55,908.86 1468.96,896.91 1516.37,908.86 1563.78,914.84 1611.19,926.80 1658.60,905.87 1706.01,899.89 1753.42,902.88 1800.83,902.88 1848.24,905.87" fill="none" stroke="#f57c00" stroke-width="5.7" stroke-linejoin="round" stroke-linecap="square"/><path d="M710.40 901.22 L715.05 905.87 L710.40 910.52 L705.75 905.87 Z" fill="#000"/><path d="M757.81 907.20 L762.46 911.85 L757.81 916.50 L753.16 911.85 Z" fill="#000"/><path d="M805.22 907.20 L809.87 911.85 L805.22 916.50 L800.57 911.85 Z" fill="#000"/><path d="M852.63 895.24 L857.28 899.89 L852.63 904.54 L847.98 899.89 Z" fill="#000"/><path d="M900.04 880.30 L904.69 884.95 L900.04 889.60 L895.39 884.95 Z" fill="#000"/><path d="M947.45 886.28 L952.10 890.93 L947.45 895.58 L942.80 890.93 Z" fill="#000"/><path d="M994.86 907.20 L999.51 911.85 L994.86 916.50 L990.21 911.85 Z" fill="#000"/><path d="M1042.27 920.65 L1046.92 925.30 L1042.27 929.95 L1037.62 925.30 Z" fill="#000"/><path d="M1089.68 907.20 L1094.33 911.85 L1089.68 916.50 L1085.03 911.85 Z" fill="#000"/><path d="M1137.09 886.28 L1141.74 890.93 L1137.09 895.58 L1132.44 890.93 Z" fill="#000"/><path d="M1184.50 895.24 L1189.15 899.89 L1184.50 904.54 L1179.85 899.89 Z" fill="#000"/><path d="M1231.91 895.24 L1236.56 899.89 L1231.91 904.54 L1227.26 899.89 Z" fill="#000"/><path d="M1279.32 895.24 L1283.97 899.89 L1279.32 904.54 L1274.67 899.89 Z" fill="#000"/><path d="M1326.73 898.23 L1331.38 902.88 L1326.73 907.53 L1322.08 902.88 Z" fill="#000"/><path d="M1374.14 898.23 L1378.79 902.88 L1374.14 907.53 L1369.49 902.88 Z" fill="#000"/><path d="M1421.55 904.21 L1426.20 908.86 L1421.55 913.51 L1416.90 908.86 Z" fill="#000"/><path d="M1468.96 892.26 L1473.61 896.91 L1468.96 901.56 L1464.31 896.91 Z" fill="#000"/><path d="M1516.37 904.21 L1521.02 908.86 L1516.37 913.51 L1511.72 908.86 Z" fill="#000"/><path d="M1563.78 910.19 L1568.43 914.84 L1563.78 919.49 L1559.13 914.84 Z" fill="#000"/><path d="M1611.19 922.15 L1615.84 926.80 L1611.19 931.45 L1606.54 926.80 Z" fill="#000"/><path d="M1658.60 901.22 L1663.25 905.87 L1658.60 910.52 L1653.95 905.87 Z" fill="#000"/><path d="M1706.01 895.24 L1710.66 899.89 L1706.01 904.54 L1701.36 899.89 Z" fill="#000"/><path d="M1753.42 898.23 L1758.07 902.88 L1753.42 907.53 L1748.77 902.88 Z" fill="#000"/><path d="M1800.83 898.23 L1805.48 902.88 L1800.83 907.53 L1796.18 902.88 Z" fill="#000"/><path d="M1848.24 901.22 L1852.89 905.87 L1848.24 910.52 L1843.59 905.87 Z" fill="#000"/><polyline points="710.40,843.10 757.81,864.02 805.22,864.02 852.63,893.92 900.04,899.89 947.45,849.08 994.86,834.13 1042.27,804.24 1089.68,834.13 1137.09,875.98 1184.50,864.02 1231.91,855.06 1279.32,846.09 1326.73,855.06 1374.14,834.13 1421.55,852.07 1468.96,843.10 1516.37,867.01 1563.78,831.14 1611.19,780.33 1658.60,878.97 1706.01,852.07 1753.42,861.03 1800.83,849.08 1848.24,858.05" fill="none" stroke="#616161" stroke-width="5.7" stroke-linejoin="round" stroke-linecap="square"/><path d="M710.40 838.45 L715.05 843.10 L710.40 847.75 L705.75 843.10 Z" fill="#000"/><path d="M757.81 859.37 L762.46 864.02 L757.81 868.67 L753.16 864.02 Z" fill="#000"/><path d="M805.22 859.37 L809.87 864.02 L805.22 868.67 L800.57 864.02 Z" fill="#000"/><path d="M852.63 889.27 L857.28 893.92 L852.63 898.57 L847.98 893.92 Z" fill="#000"/><path d="M900.04 895.24 L904.69 899.89 L900.04 904.54 L895.39 899.89 Z" fill="#000"/><path d="M947.45 844.43 L952.10 849.08 L947.45 853.73 L942.80 849.08 Z" fill="#000"/><path d="M994.86 829.48 L999.51 834.13 L994.86 838.78 L990.21 834.13 Z" fill="#000"/><path d="M1042.27 799.59 L1046.92 804.24 L1042.27 808.89 L1037.62 804.24 Z" fill="#000"/><path d="M1089.68 829.48 L1094.33 834.13 L1089.68 838.78 L1085.03 834.13 Z" fill="#000"/><path d="M1137.09 871.33 L1141.74 875.98 L1137.09 880.63 L1132.44 875.98 Z" fill="#000"/><path d="M1184.50 859.37 L1189.15 864.02 L1184.50 868.67 L1179.85 864.02 Z" fill="#000"/><path d="M1231.91 850.41 L1236.56 855.06 L1231.91 859.71 L1227.26 855.06 Z" fill="#000"/><path d="M1279.32 841.44 L1283.97 846.09 L1279.32 850.74 L1274.67 846.09 Z" fill="#000"/><path d="M1326.73 850.41 L1331.38 855.06 L1326.73 859.71 L1322.08 855.06 Z" fill="#000"/><path d="M1374.14 829.48 L1378.79 834.13 L1374.14 838.78 L1369.49 834.13 Z" fill="#000"/><path d="M1421.55 847.42 L1426.20 852.07 L1421.55 856.72 L1416.90 852.07 Z" fill="#000"/><path d="M1468.96 838.45 L1473.61 843.10 L1468.96 847.75 L1464.31 843.10 Z" fill="#000"/><path d="M1516.37 862.36 L1521.02 867.01 L1516.37 871.66 L1511.72 867.01 Z" fill="#000"/><path d="M1563.78 826.49 L1568.43 831.14 L1563.78 835.79 L1559.13 831.14 Z" fill="#000"/><path d="M1611.19 775.68 L1615.84 780.33 L1611.19 784.98 L1606.54 780.33 Z" fill="#000"/><path d="M1658.60 874.32 L1663.25 878.97 L1658.60 883.62 L1653.95 878.97 Z" fill="#000"/><path d="M1706.01 847.42 L1710.66 852.07 L1706.01 856.72 L1701.36 852.07 Z" fill="#000"/><path d="M1753.42 856.38 L1758.07 861.03 L1753.42 865.68 L1748.77 861.03 Z" fill="#000"/><path d="M1800.83 844.43 L1805.48 849.08 L1800.83 853.73 L1796.18 849.08 Z" fill="#000"/><path d="M1848.24 853.40 L1852.89 858.05 L1848.24 862.70 L1843.59 858.05 Z" fill="#000"/><polyline points="710.40,913.35 757.81,919.32 805.22,919.32 852.63,907.37 900.04,892.42 947.45,898.40 994.86,919.32 1042.27,932.78 1089.68,919.32 1137.09,898.40 1184.50,907.37 1231.91,907.37 1279.32,907.37 1326.73,910.36 1374.14,910.36 1421.55,916.34 1468.96,904.38 1516.37,916.34 1563.78,922.31 1611.19,934.27 1658.60,913.35 1706.01,907.37 1753.42,910.36 1800.83,910.36 1848.24,913.35" fill="none" stroke="#fff" stroke-width="7.6" stroke-linejoin="round"/><polyline points="710.40,913.35 757.81,919.32 805.22,919.32 852.63,907.37 900.04,892.42 947.45,898.40 994.86,919.32 1042.27,932.78 1089.68,919.32 1137.09,898.40 1184.50,907.37 1231.91,907.37 1279.32,907.37 1326.73,910.36 1374.14,910.36 1421.55,916.34 1468.96,904.38 1516.37,916.34 1563.78,922.31 1611.19,934.27 1658.60,913.35 1706.01,907.37 1753.42,910.36 1800.83,910.36 1848.24,913.35" fill="none" stroke="#0277bd" stroke-width="5.7" stroke-linejoin="round" stroke-linecap="square"/><path d="M710.40 908.70 L715.05 913.35 L710.40 918.00 L705.75 913.35 Z" fill="#000"/><path d="M757.81 914.67 L762.46 919.32 L757.81 923.97 L753.16 919.32 Z" fill="#000"/><path d="M805.22 914.67 L809.87 919.32 L805.22 923.97 L800.57 919.32 Z" fill="#000"/><path d="M852.63 902.72 L857.28 907.37 L852.63 912.02 L847.98 907.37 Z" fill="#000"/><path d="M900.04 887.77 L904.69 892.42 L900.04 897.07 L895.39 892.42 Z" fill="#000"/><path d="M947.45 893.75 L952.10 898.40 L947.45 903.05 L942.80 898.40 Z" fill="#000"/><path d="M994.86 914.67 L999.51 919.32 L994.86 923.97 L990.21 919.32 Z" fill="#000"/><path d="M1042.27 928.13 L1046.92 932.78 L1042.27 937.43 L1037.62 932.78 Z" fill="#000"/><path d="M1089.68 914.67 L1094.33 919.32 L1089.68 923.97 L1085.03 919.32 Z" fill="#000"/><path d="M1137.09 893.75 L1141.74 898.40 L1137.09 903.05 L1132.44 898.40 Z" fill="#000"/><path d="M1184.50 902.72 L1189.15 907.37 L1184.50 912.02 L1179.85 907.37 Z" fill="#000"/><path d="M1231.91 902.72 L1236.56 907.37 L1231.91 912.02 L1227.26 907.37 Z" fill="#000"/><path d="M1279.32 902.72 L1283.97 907.37 L1279.32 912.02 L1274.67 907.37 Z" fill="#000"/><path d="M1326.73 905.71 L1331.38 910.36 L1326.73 915.01 L1322.08 910.36 Z" fill="#000"/><path d="M1374.14 905.71 L1378.79 910.36 L1374.14 915.01 L1369.49 910.36 Z" fill="#000"/><path d="M1421.55 911.69 L1426.20 916.34 L1421.55 920.99 L1416.90 916.34 Z" fill="#000"/><path d="M1468.96 899.73 L1473.61 904.38 L1468.96 909.03 L1464.31 904.38 Z" fill="#000"/><path d="M1516.37 911.69 L1521.02 916.34 L1516.37 920.99 L1511.72 916.34 Z" fill="#000"/><path d="M1563.78 917.66 L1568.43 922.31 L1563.78 926.96 L1559.13 922.31 Z" fill="#000"/><path d="M1611.19 929.62 L1615.84 934.27 L1611.19 938.92 L1606.54 934.27 Z" fill="#000"/><path d="M1658.60 908.70 L1663.25 913.35 L1658.60 918.00 L1653.95 913.35 Z" fill="#000"/><path d="M1706.01 902.72 L1710.66 907.37 L1706.01 912.02 L1701.36 907.37 Z" fill="#000"/><path d="M1753.42 905.71 L1758.07 910.36 L1753.42 915.01 L1748.77 910.36 Z" fill="#000"/><path d="M1800.83 905.71 L1805.48 910.36 L1800.83 915.01 L1796.18 910.36 Z" fill="#000"/><path d="M1848.24 908.70 L1852.89 913.35 L1848.24 918.00 L1843.59 913.35 Z" fill="#000"/><polyline points="710.40,928.59 757.81,928.59 805.22,928.59 852.63,928.59 900.04,928.59 947.45,928.59 994.86,928.59 1042.27,928.59 1089.68,928.59 1137.09,928.59 1184.50,928.59 1231.91,928.59 1279.32,927.69 1326.73,932.78 1374.14,928.24 1421.55,927.95 1468.96,927.65 1516.37,928.09 1563.78,928.30 1611.19,928.30 1658.60,928.22 1706.01,928.26 1753.42,933.16 1800.83,928.11 1848.24,927.38" fill="none" stroke="#f9a825" stroke-width="5.7" stroke-linejoin="round" stroke-linecap="square"/><path d="M710.40 923.94 L715.05 928.59 L710.40 933.24 L705.75 928.59 Z" fill="#000"/><path d="M757.81 923.94 L762.46 928.59 L757.81 933.24 L753.16 928.59 Z" fill="#000"/><path d="M805.22 923.94 L809.87 928.59 L805.22 933.24 L800.57 928.59 Z" fill="#000"/><path d="M852.63 923.94 L857.28 928.59 L852.63 933.24 L847.98 928.59 Z" fill="#000"/><path d="M900.04 923.94 L904.69 928.59 L900.04 933.24 L895.39 928.59 Z" fill="#000"/><path d="M947.45 923.94 L952.10 928.59 L947.45 933.24 L942.80 928.59 Z" fill="#000"/><path d="M994.86 923.94 L999.51 928.59 L994.86 933.24 L990.21 928.59 Z" fill="#000"/><path d="M1042.27 923.94 L1046.92 928.59 L1042.27 933.24 L1037.62 928.59 Z" fill="#000"/><path d="M1089.68 923.94 L1094.33 928.59 L1089.68 933.24 L1085.03 928.59 Z" fill="#000"/><path d="M1137.09 923.94 L1141.74 928.59 L1137.09 933.24 L1132.44 928.59 Z" fill="#000"/><path d="M1184.50 923.94 L1189.15 928.59 L1184.50 933.24 L1179.85 928.59 Z" fill="#000"/><path d="M1231.91 923.94 L1236.56 928.59 L1231.91 933.24 L1227.26 928.59 Z" fill="#000"/><path d="M1279.32 923.04 L1283.97 927.69 L1279.32 932.34 L1274.67 927.69 Z" fill="#000"/><path d="M1326.73 928.13 L1331.38 932.78 L1326.73 937.43 L1322.08 932.78 Z" fill="#000"/><path d="M1374.14 923.59 L1378.79 928.24 L1374.14 932.89 L1369.49 928.24 Z" fill="#000"/><path d="M1421.55 923.30 L1426.20 927.95 L1421.55 932.60 L1416.90 927.95 Z" fill="#000"/><path d="M1468.96 923.00 L1473.61 927.65 L1468.96 932.30 L1464.31 927.65 Z" fill="#000"/><path d="M1516.37 923.44 L1521.02 928.09 L1516.37 932.74 L1511.72 928.09 Z" fill="#000"/><path d="M1563.78 923.65 L1568.43 928.30 L1563.78 932.95 L1559.13 928.30 Z" fill="#000"/><path d="M1611.19 923.65 L1615.84 928.30 L1611.19 932.95 L1606.54 928.30 Z" fill="#000"/><path d="M1658.60 923.57 L1663.25 928.22 L1658.60 932.87 L1653.95 928.22 Z" fill="#000"/><path d="M1706.01 923.61 L1710.66 928.26 L1706.01 932.91 L1701.36 928.26 Z" fill="#000"/><path d="M1753.42 928.51 L1758.07 933.16 L1753.42 937.81 L1748.77 933.16 Z" fill="#000"/><path d="M1800.83 923.46 L1805.48 928.11 L1800.83 932.76 L1796.18 928.11 Z" fill="#000"/><path d="M1848.24 922.73 L1852.89 927.38 L1848.24 932.03 L1843.59 927.38 Z" fill="#000"/></g><line x1="686.5" y1="750" x2="686.5" y2="934.9" stroke="#000" stroke-width="1.1"/><line x1="686" y1="934.4" x2="1871.7" y2="934.4" stroke="#000" stroke-width="1.1"/><rect x="691.5" y="755.3" width="191.8" height="66.1" rx="2.5" fill="#fff" fill-opacity="0.85" stroke="#d4d4d4" stroke-width="1"/><line x1="693.2" y1="764.00" x2="720.8" y2="764.00" stroke="#f57c00" stroke-width="5.7"/><line x1="693.2" y1="779.00" x2="720.8" y2="779.00" stroke="#616161" stroke-width="5.7"/><line x1="693.2" y1="794.90" x2="720.8" y2="794.90" stroke="#0277bd" stroke-width="5.7"/><line x1="693.2" y1="810.00" x2="720.8" y2="810.00" stroke="#f9a825" stroke-width="5.7"/></svg>
<div class="t" style="left:727.30px;top:760.35px;font-size:11.4px;line-height:11.4px;color:#111;font-weight:400;letter-spacing:0.496px;">Quantidade Gasta (kWh)</div>
<div class="t" style="left:727.30px;top:775.35px;font-size:11.4px;line-height:11.4px;color:#111;font-weight:400;letter-spacing:0.570px;">Quantidade Injetada (kWh)</div>
<div class="t" style="left:727.30px;top:791.35px;font-size:11.4px;line-height:11.4px;color:#111;font-weight:400;letter-spacing:0.384px;">Energia Compensada GD I</div>
<div class="t" style="left:727.30px;top:807.35px;font-size:11.4px;line-height:11.4px;color:#111;font-weight:400;letter-spacing:0.320px;">Valor (R$)</div>
<div class="t" style="left:76.46px;width:600px;text-align:right;top:782.93px;font-size:11.9px;line-height:11.9px;color:#111;font-weight:400;letter-spacing:0.957px;">2000</div>
<div class="t" style="left:76.46px;width:600px;text-align:right;top:819.93px;font-size:11.9px;line-height:11.9px;color:#111;font-weight:400;letter-spacing:0.957px;">1500</div>
<div class="t" style="left:76.46px;width:600px;text-align:right;top:857.93px;font-size:11.9px;line-height:11.9px;color:#111;font-weight:400;letter-spacing:0.957px;">1000</div>
<div class="t" style="left:76.46px;width:600px;text-align:right;top:894.93px;font-size:11.9px;line-height:11.9px;color:#111;font-weight:400;letter-spacing:0.957px;">500</div>
<div class="t" style="left:410.85px;width:600px;text-align:center;top:945.93px;font-size:11.9px;line-height:11.9px;color:#111;font-weight:400;letter-spacing:0.898px;">06/2023</div>
<div class="t" style="left:505.67px;width:600px;text-align:center;top:945.93px;font-size:11.9px;line-height:11.9px;color:#111;font-weight:400;letter-spacing:0.898px;">08/2023</div>
<div class="t" style="left:600.49px;width:600px;text-align:center;top:945.93px;font-size:11.9px;line-height:11.9px;color:#111;font-weight:400;letter-spacing:0.898px;">10/2023</div>
<div class="t" style="left:695.31px;width:600px;text-align:center;top:945.93px;font-size:11.9px;line-height:11.9px;color:#111;font-weight:400;letter-spacing:0.898px;">12/2023</div>
<div class="t" style="left:790.13px;width:600px;text-align:center;top:945.93px;font-size:11.9px;line-height:11.9px;color:#111;font-weight:400;letter-spacing:0.898px;">02/2024</div>
<div class="t" style="left:884.95px;width:600px;text-align:center;top:945.93px;font-size:11.9px;line-height:11.9px;color:#111;font-weight:400;letter-spacing:0.898px;">04/2024</div>
<div class="t" style="left:979.77px;width:600px;text-align:center;top:945.93px;font-size:11.9px;line-height:11.9px;color:#111;font-weight:400;letter-spacing:0.898px;">06/2024</div>
<div class="t" style="left:1074.59px;width:600px;text-align:center;top:945.93px;font-size:11.9px;line-height:11.9px;color:#111;font-weight:400;letter-spacing:0.898px;">08/2024</div>
<div class="t" style="left:1169.41px;width:600px;text-align:center;top:945.93px;font-size:11.9px;line-height:11.9px;color:#111;font-weight:400;letter-spacing:0.898px;">10/2024</div>
<div class="t" style="left:1264.23px;width:600px;text-align:center;top:945.93px;font-size:11.9px;line-height:11.9px;color:#111;font-weight:400;letter-spacing:0.898px;">12/2024</div>
<div class="t" style="left:1359.05px;width:600px;text-align:center;top:945.93px;font-size:11.9px;line-height:11.9px;color:#111;font-weight:400;letter-spacing:0.898px;">02/2025</div>
<div class="t" style="left:1453.87px;width:600px;text-align:center;top:945.93px;font-size:11.9px;line-height:11.9px;color:#111;font-weight:400;letter-spacing:0.898px;">04/2025</div>
<div class="t" style="left:1548.69px;width:600px;text-align:center;top:945.93px;font-size:11.9px;line-height:11.9px;color:#111;font-weight:400;letter-spacing:0.898px;">06/2025</div>
</body></html>
